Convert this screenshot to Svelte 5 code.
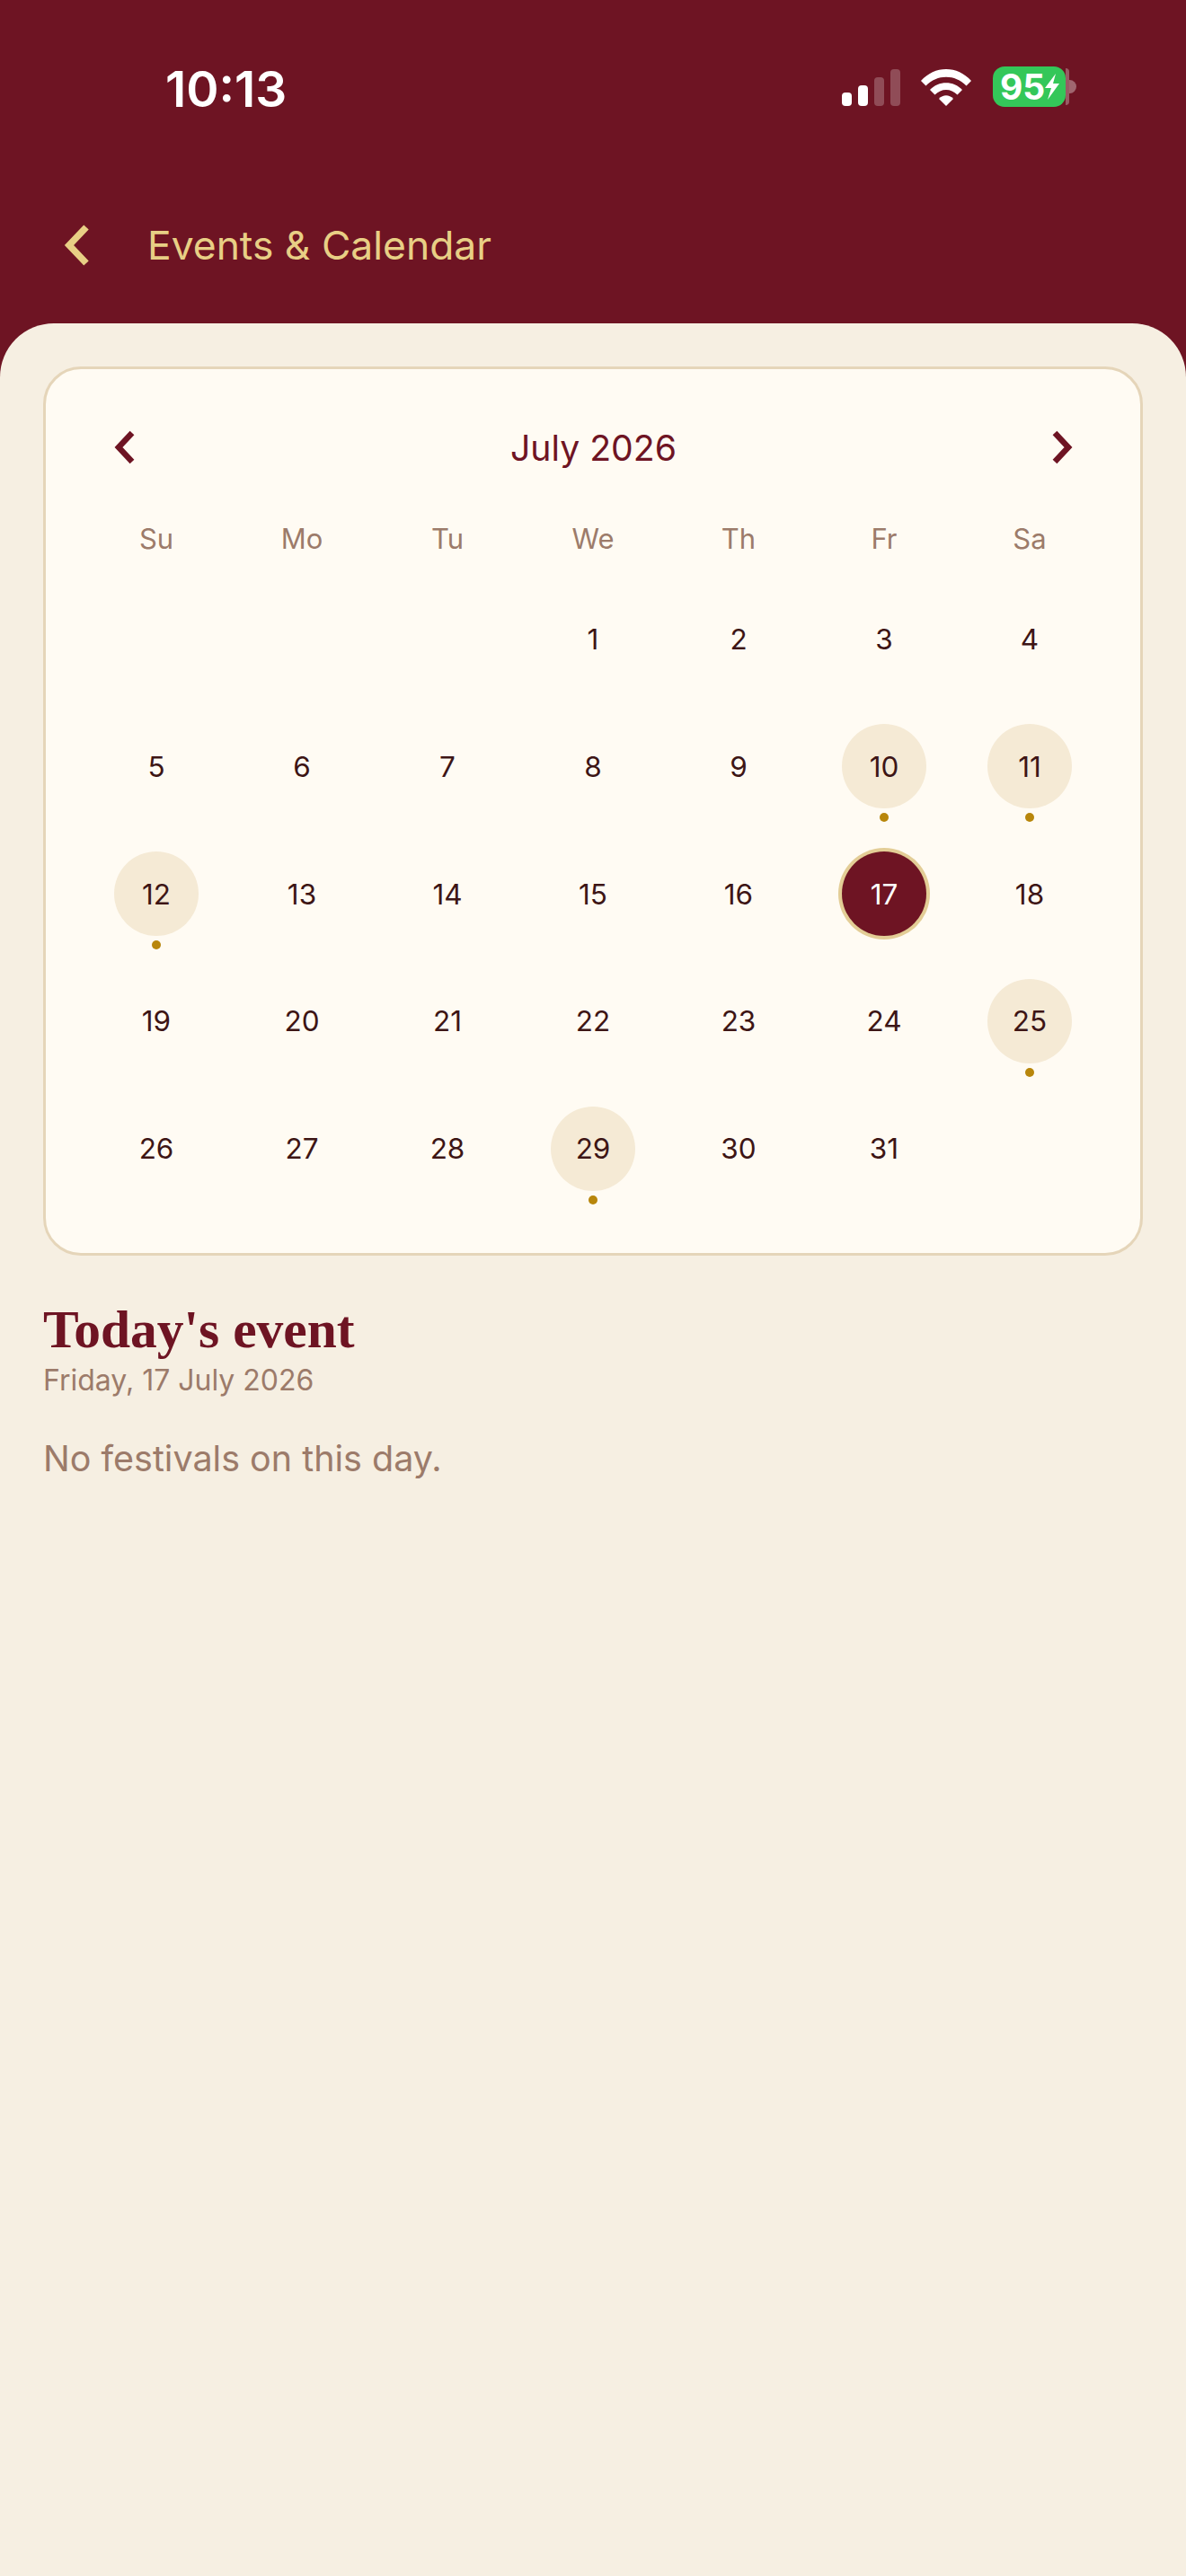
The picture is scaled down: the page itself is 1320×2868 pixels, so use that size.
<script>
  const weekdays = ['Su', 'Mo', 'Tu', 'We', 'Th', 'Fr', 'Sa'];
  const eventDays = [10, 11, 12, 25, 29];
  const today = 17;
  const cells = [null, null, null];
  for (let d = 1; d <= 31; d++) cells.push(d);
</script>

<div class="screen">
  <header class="top">
    <div class="status">
      <span class="time">10:13</span>
      <div class="indicators">
        <div class="signal">
          <i class="bar b1"></i><i class="bar b2"></i><i class="bar b3 dim"></i><i class="bar b4 dim"></i>
        </div>
        <svg class="wifi" width="58" height="42" viewBox="0 0 58 42" aria-hidden="true">
          <path d="M1 14 C16 -3.5 42 -3.5 57 14 L51.500 19.500 C39 6.500 19 6.500 6.500 19.500 Z" fill="#fff"/>
          <path d="M11 24 C20.500 13.500 37.500 13.500 47 24 L41.500 29.500 C34.500 22 23.500 22 16.500 29.500 Z" fill="#fff"/>
          <path d="M21 34 C25.500 29 32.500 29 37 34 L29 42 Z" fill="#fff"/>
        </svg>
        <div class="battery">
          <div class="cell"><span>95</span>
            <svg class="bolt" width="16" height="29" viewBox="0 0 16 29" aria-hidden="true">
              <path d="M12 0 L0 16 H7 L3 29 L16 11 H9 Z" fill="#fff"/>
            </svg>
          </div>
          <i class="rest"></i><i class="nub"></i>
        </div>
      </div>
    </div>
    <div class="titlebar">
      <svg class="back" width="30" height="46" viewBox="0 0 30 46" aria-hidden="true">
        <path d="M25 3 L6 23 L25 43" fill="none" stroke="#e8cf85" stroke-width="7.500"/>
      </svg>
      <h1>Events &amp; Calendar</h1>
    </div>
  </header>

  <main class="panel">
    <section class="card">
      <div class="month">
        <svg width="24" height="38" viewBox="0 0 24 38" aria-hidden="true">
          <path d="M20 3 L5 19 L20 35" fill="none" stroke="#6e1423" stroke-width="6.500"/>
        </svg>
        <h2>July 2026</h2>
        <svg width="24" height="38" viewBox="0 0 24 38" aria-hidden="true">
          <path d="M4 3 L19 19 L4 35" fill="none" stroke="#6e1423" stroke-width="6.500"/>
        </svg>
      </div>
      <div class="grid heads">
        {#each weekdays as w}<span>{w}</span>{/each}
      </div>
      <div class="grid days">
        {#each cells as d}
          <div class="day">
            {#if d}
              <span class="num" class:event={eventDays.includes(d)} class:today={d === today}>{d}</span>
              {#if eventDays.includes(d)}<i class="dot"></i>{/if}
            {/if}
          </div>
        {/each}
      </div>
    </section>

    <section class="events">
      <h3>Today's event</h3>
      <p class="date">Friday, 17 July 2026</p>
      <p class="none">No festivals on this day.</p>
    </section>
  </main>
</div>

<style>
  :global(body) { margin: 0; background: #6e1423; }
  .screen {
    width: 1320px;
    height: 2868px;
    display: flex;
    flex-direction: column;
    background: #6e1423;
    font-family: Inter, "Noto Sans", sans-serif;
    overflow: hidden;
  }
  .top { height: 360px; flex: none; box-sizing: border-box; }
  .status {
    height: 196px;
    box-sizing: border-box;
    padding: 71px 122px 0 184px;
    display: flex;
    justify-content: space-between;
    align-items: flex-start;
  }
  .time { color: #fff; font-size: 55px; font-weight: 600; line-height: 56px; }
  .indicators { display: flex; align-items: flex-end; height: 46px; margin-top: 3px; }
  .signal { display: flex; align-items: flex-end; gap: 7px; height: 41px; margin-bottom: 2px; }
  .bar { display: block; width: 11px; background: #fff; border-radius: 4px; }
  .b1 { height: 15px; }
  .b2 { height: 23px; }
  .b3 { height: 32px; }
  .b4 { height: 41px; }
  .dim { opacity: 0.24; }
  .wifi { margin: 0 23px 2px 22px; }
  .battery { display: flex; align-items: center; height: 45px; margin-bottom: 1px; }
  .cell {
    width: 81px;
    height: 45px;
    box-sizing: border-box;
    padding-left: 8px;
    background: #34c759;
    border-radius: 13px;
    display: flex;
    align-items: center;
    color: #fff;
    font-size: 39px;
    font-weight: 700;
    line-height: 45px;
  }
  .rest { display: block; width: 4px; height: 41px; background: rgba(255,255,255,0.3); border-radius: 0 6px 6px 0; }
  .nub { display: block; width: 8px; height: 15px; background: rgba(255,255,255,0.35); border-radius: 0 8px 8px 0; }
  .titlebar {
    display: flex;
    align-items: center;
    height: 60px;
    margin-top: 47px;
    padding-left: 71px;
  }
  .back { margin-right: 63px; }
  h1 { margin: 0; color: #e8cf85; font-size: 44.400px; font-weight: 400; line-height: 60px; }

  .panel {
    flex: 1;
    background: #f6efe2;
    border-radius: 60px 60px 0 0;
    padding: 48px 48px 0;
  }
  .card {
    height: 990px;
    box-sizing: border-box;
    background: #fffbf3;
    border: 3px solid #e5d5b9;
    border-radius: 42px;
    padding: 0 42px;
  }
  .month {
    height: 90px;
    margin-top: 42px;
    padding: 0 33px 0 34px;
    display: flex;
    justify-content: space-between;
    align-items: center;
  }
  h2 { margin: 0; color: #6e1423; font-size: 39.200px; font-weight: 400; }
  .grid { display: grid; grid-template-columns: repeat(7, 1fr); text-align: center; }
  .heads { height: 60px; align-items: center; margin-top: 26px; color: #9c7b6a; font-size: 31px; }
  .days { grid-auto-rows: 141.800px; margin-top: 11.500px; }
  .day { display: flex; flex-direction: column; align-items: center; padding-top: 24px; color: #3d1515; font-size: 31.500px; }
  .num {
    width: 94px;
    height: 94px;
    flex: none;
    border-radius: 50%;
    display: flex;
    align-items: center;
    justify-content: center;
  }
  .event { background: #f5ead5; }
  .today { background: #6e1423; color: #fff; box-shadow: 0 0 0 4px #e3cd96; }
  .dot { display: block; width: 10px; height: 10px; margin-top: 5px; border-radius: 50%; background: #b8860b; }

  .events { margin-top: 50px; }
  h3 { margin: 0; color: #6e1423; font-family: "Liberation Serif", serif; font-size: 59.500px; font-weight: 700; line-height: 64px; }
  .date { margin: 3px 0 0; color: #9c7b6a; font-size: 32px; line-height: 44px; }
  .none { margin: 38px 0 0; color: #9c7b6a; font-size: 39.500px; line-height: 54px; }
</style>
